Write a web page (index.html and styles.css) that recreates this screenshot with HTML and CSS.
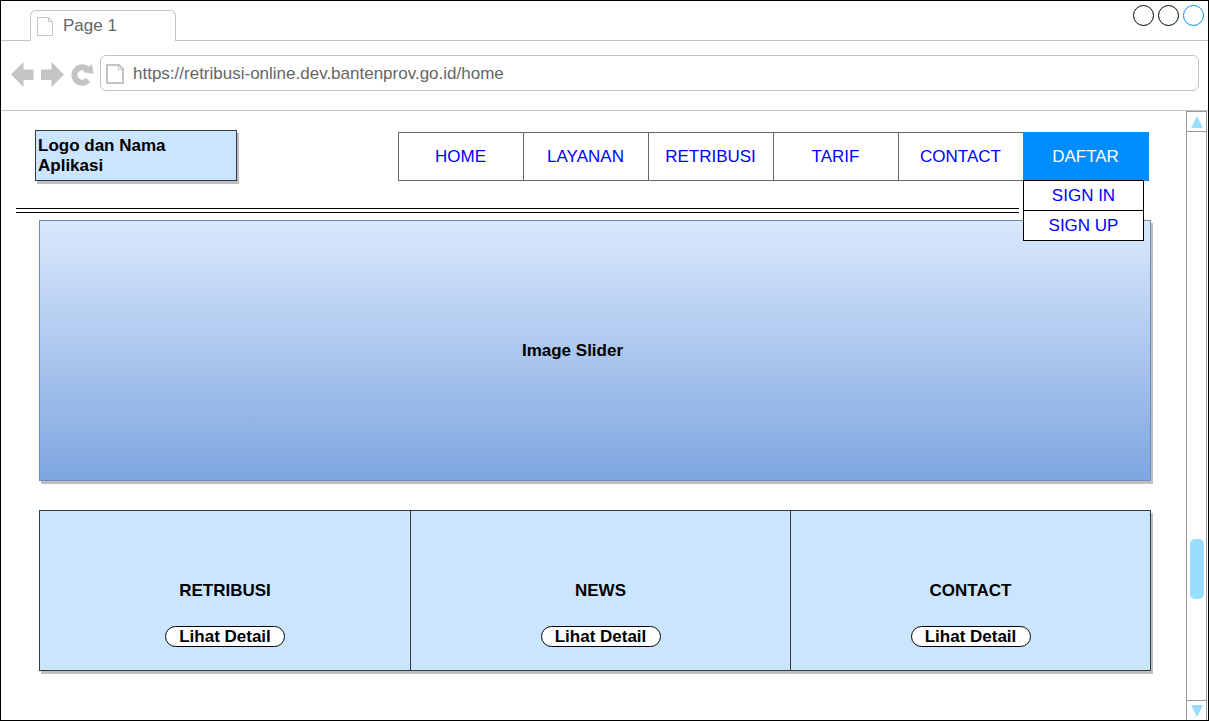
FILE: index.html
```html
<!DOCTYPE html>
<html lang="id">
<head>
<meta charset="utf-8">
<title>Page 1</title>
<link rel="stylesheet" href="styles.css">
</head>
<body>
<div class="browser">
  <div class="tab-strip">
    <div class="tab">
      <svg width="17" height="19" viewBox="0 0 17 19" fill="none" stroke="#c4c4c4" aria-hidden="true"><path d="M.5.5h11l4 4v14H.5zM11.500.5v4h4"/></svg>
      <span>Page 1</span>
    </div>
    <div class="window-controls">
      <button class="window-button" type="button" aria-label="Minimize"></button>
      <button class="window-button" type="button" aria-label="Maximize"></button>
      <button class="window-button window-button-close" type="button" aria-label="Close"></button>
    </div>
  </div>

  <div class="toolbar">
    <button class="tool" type="button" aria-label="Back"><svg width="24" height="26" viewBox="0 0 24 26" fill="#c4c4c4"><path d="M1 12.500 13.500 0v7.500h10v10.500h-10v7z"/></svg></button>
    <button class="tool" type="button" aria-label="Forward"><svg width="24" height="26" viewBox="0 0 24 26" fill="#c4c4c4"><path d="M24 12.500 11.500 0v7.500H1v10.500h10.500v7z"/></svg></button>
    <button class="tool" type="button" aria-label="Reload"><svg width="24" height="26" viewBox="0 0 24 26"><path d="M18 18A7.700 7.700 0 1 1 17.500 7.500" fill="none" stroke="#c4c4c4" stroke-width="6"/><path d="m22 2 1.500 10-10.500-2z" fill="#c4c4c4"/></svg></button>
    <label class="address">
      <svg width="18" height="20" viewBox="0 0 18 20" fill="none" stroke="#c4c4c4" stroke-width="2" aria-hidden="true"><path d="M1 1h12l4 4v14H1z"/><path d="M12.500 1v4.500H17" stroke-width="1"/></svg>
      <input class="address-input" type="text" aria-label="Address" value="https://retribusi-online.dev.bantenprov.go.id/home">
    </label>
  </div>

  <div class="viewport">
    <div class="page">
      <header class="header">
        <div class="logo">Logo dan Nama<br>Aplikasi</div>
        <nav class="nav">
          <a class="nav-link" href="#">HOME</a>
          <a class="nav-link" href="#">LAYANAN</a>
          <a class="nav-link" href="#">RETRIBUSI</a>
          <a class="nav-link" href="#">TARIF</a>
          <a class="nav-link" href="#">CONTACT</a>
          <div class="nav-group">
            <a class="nav-link nav-link-active" href="#">DAFTAR</a>
            <div class="menu">
              <a class="menu-link" href="#">SIGN IN</a>
              <a class="menu-link" href="#">SIGN UP</a>
            </div>
          </div>
        </nav>
      </header>
      <div class="rule"></div>
      <main class="main">
        <section class="slider">Image Slider</section>
        <div class="cards">
          <section class="card"><h2 class="card-title">RETRIBUSI</h2><button class="detail" type="button">Lihat Detail</button></section>
          <section class="card"><h2 class="card-title">NEWS</h2><button class="detail" type="button">Lihat Detail</button></section>
          <section class="card"><h2 class="card-title">CONTACT</h2><button class="detail" type="button">Lihat Detail</button></section>
        </div>
      </main>
    </div>
    <div class="scrollbar">
      <button class="scroll-button" type="button" aria-label="Scroll up"><svg width="12" height="12" viewBox="0 0 12 12" fill="#99ddff"><path d="M6 0 12 12H0z"/></svg></button>
      <div class="scroll-track"><div class="scroll-thumb"></div></div>
      <button class="scroll-button" type="button" aria-label="Scroll down"><svg width="12" height="12" viewBox="0 0 12 12" fill="#99ddff"><path d="M6 12 12 0H0z"/></svg></button>
    </div>
  </div>
</div>
</body>
</html>
```
FILE: styles.css
```css
* { box-sizing: border-box; }

body {
  margin: 0;
  background: #fff;
  color: #000;
  font: 17px/20px "Liberation Sans", Arial, sans-serif;
}

button, input { font: inherit; color: inherit; }
button { display: block; margin: 0; padding: 0; border: 0; background: none; }
svg { display: block; flex: none; }
a { text-decoration: none; }

.browser {
  display: flex;
  flex-direction: column;
  min-height: 100vh;
  border: 1px solid #000;
}

/* Browser frame */
.tab-strip {
  display: flex;
  justify-content: space-between;
  align-items: flex-end;
  height: 40px;
  padding: 0 4px 0 29px;
  border-bottom: 1px solid #c4c4c4;
}

.tab {
  display: flex;
  align-items: center;
  gap: 9px;
  width: 146px;
  height: 31px;
  margin-bottom: -1px;
  padding-left: 6px;
  border: 1px solid #c4c4c4;
  border-bottom: 0;
  border-radius: 6px 6px 0 0;
  background: #fff;
  color: #666;
}

.window-controls {
  display: flex;
  align-self: flex-start;
  gap: 4px;
  padding-top: 4px;
}

.window-button {
  width: 21px;
  height: 21px;
  border: 1px solid #000;
  border-radius: 50%;
}

.window-button-close { border-color: #008cff; }

.toolbar {
  display: flex;
  align-items: center;
  gap: 6px;
  height: 70px;
  padding: 0 9px 2px;
  border-bottom: 1px solid #c4c4c4;
}

.tool { flex: none; }

.address {
  display: flex;
  align-items: center;
  flex: 1;
  gap: 9px;
  height: 36px;
  margin-bottom: 4px;
  padding: 2px 0 0 5px;
  border: 1px solid #c4c4c4;
  border-radius: 6px;
}

.address-input {
  flex: 1;
  min-width: 0;
  padding: 0;
  border: 0;
  outline: 0;
  background: none;
  color: #666;
}

/* Page */
.viewport { display: flex; flex: 1; }

.page { flex: 1; min-width: 0; padding: 19px 0 48px; }

.header {
  display: flex;
  justify-content: space-between;
  align-items: flex-end;
  padding: 0 37px 0 34px;
}

.logo {
  width: 202px;
  padding: 5px 2px 4px;
  border: 1px solid #36393d;
  background: #cce5ff;
  box-shadow: 2px 3px 0 #bfbfbf;
  font-weight: bold;
}

.nav { display: flex; padding-left: 1px; }

.nav-link {
  display: block;
  width: 126px;
  margin-left: -1px;
  padding: 14px 1px 13px 0;
  border: 1px solid #666;
  color: #00f;
  text-align: center;
}

.nav-link-active { border-color: #008cff; background: #008cff; color: #fff; }

.nav-group { position: relative; }

.menu {
  position: absolute;
  top: 100%;
  left: -1px;
  width: 121px;
  margin-top: -1px;
  border: 1px solid #000;
  background: #fff;
}

.menu-link {
  display: block;
  padding: 5px 0 4px;
  color: #00f;
  text-align: center;
}

.menu-link + .menu-link { border-top: 1px solid #000; }

.rule {
  height: 5px;
  margin: 27px 167px 7px 15px;
  border: solid #000;
  border-width: 1px 0;
}

.main {
  display: flex;
  flex-direction: column;
  gap: 29px;
  padding: 0 35px 0 38px;
}

.slider {
  display: flex;
  justify-content: center;
  align-items: center;
  min-height: 261px;
  padding-right: 45px;
  border: 1px solid #6c8ebf;
  background: linear-gradient(#dae8fc, #7ea6e0);
  box-shadow: 2px 3px 0 #bfbfbf;
  font-weight: bold;
}

.cards {
  display: grid;
  grid-template-columns: 370fr 380fr 360fr;
  border: 1px solid #36393d;
  background: #cce5ff;
  box-shadow: 2px 3px 0 #bfbfbf;
}

.card {
  display: flex;
  flex-direction: column;
  align-items: center;
  gap: 25px;
  padding: 70px 0 23px;
}

.card + .card { border-left: 1px solid #36393d; }

.card-title { margin: 0; font-size: 17px; }

.detail {
  width: 120px;
  height: 21px;
  border: 1px solid #000;
  border-radius: 11px;
  background: #fff;
  font-weight: bold;
  line-height: 19px;
}

/* Scrollbar */
.scrollbar {
  display: flex;
  flex-direction: column;
  width: 21px;
  margin-right: 1px;
  border: 1px solid #999;
  border-bottom: 0;
}

.scroll-button {
  display: flex;
  justify-content: center;
  align-items: center;
  height: 19px;
}

.scroll-track {
  display: grid;
  flex: 1;
  grid-template-rows: 407fr 60px 101fr;
  justify-content: center;
  border: solid #999;
  border-width: 1px 0;
}

.scroll-thumb {
  grid-row: 2;
  width: 14px;
  border-radius: 5px;
  background: #99ddff;
}
```
